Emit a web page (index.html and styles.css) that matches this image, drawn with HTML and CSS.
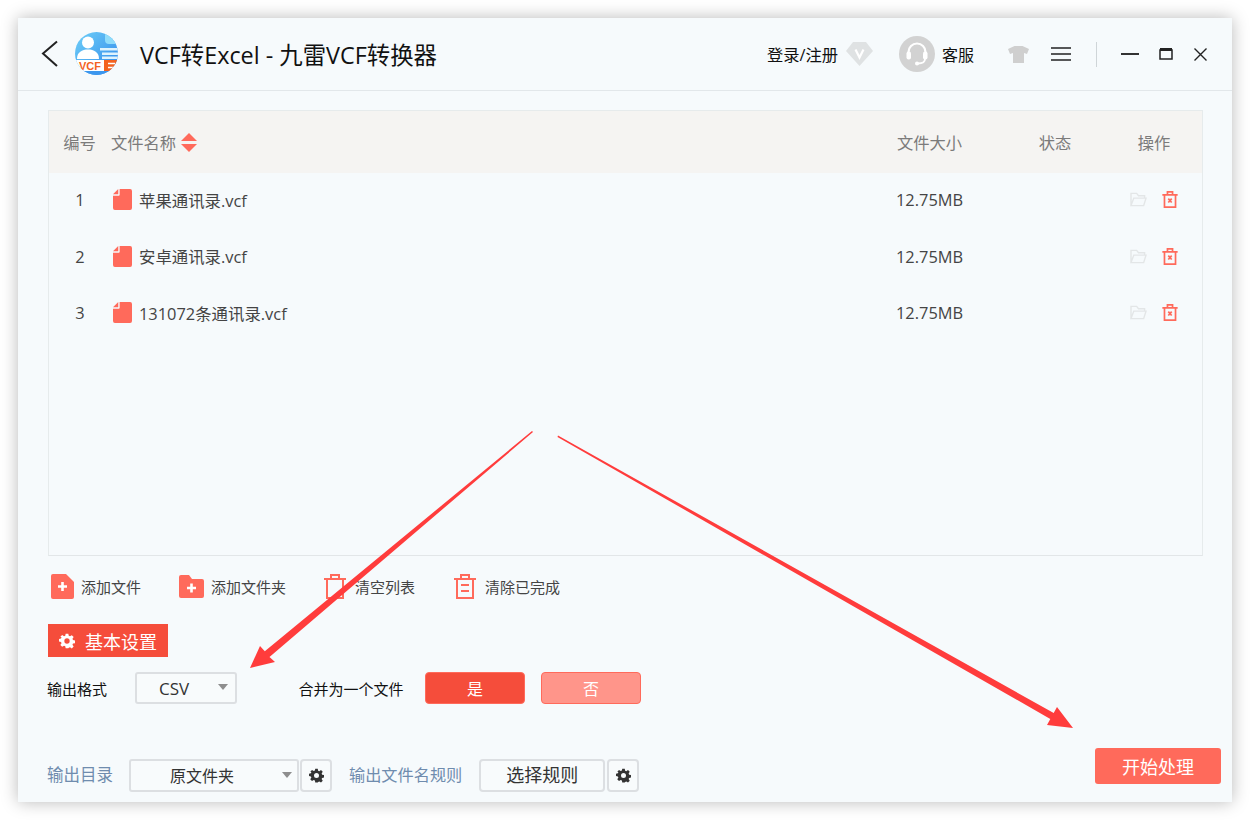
FILE: index.html
```html
<!DOCTYPE html>
<html lang="zh-CN">
<head>
<meta charset="utf-8">
<title>VCF转Excel - 九雷VCF转换器</title>
<link rel="stylesheet" href="styles.css">
</head>
<body>
<svg width="0" height="0" class="defs">
  <defs>
    <symbol id="gear" viewBox="0 0 24 24"><path fill-rule="evenodd" d="M10 1h4l.6 3.2 1.9.8 2.7-1.8 2.8 2.8-1.8 2.7.8 1.9 3 .6v4l-3 .6-.8 1.9 1.8 2.7-2.8 2.8-2.7-1.8-1.9.8L14 23h-4l-.6-3.2-1.9-.8-2.7 1.8L2 18l1.8-2.7-.8-1.9-3-.6V9l3-.6.8-1.9L2 5.800 4.800 3l2.700 1.800 1.900-.8zM12 8a4 4 0 1 0 0 8 4 4 0 0 0 0-8z"/></symbol>
    <symbol id="doc" viewBox="0 0 20 22"><path d="M7 0h11a2 2 0 0 1 2 2v18a2 2 0 0 1-2 2H2a2 2 0 0 1-2-2V7h6a1 1 0 0 0 1-1z"/><path d="M5.500 0v5.500H0z"/></symbol>
    <symbol id="folder" viewBox="0 0 18 16"><path fill="none" stroke="currentColor" stroke-width="1.500" d="M1 14.500V1.500h6l2 2.500h6.500v2.500M1 14.500h13.500l2.500-8H4z"/></symbol>
    <symbol id="bin" viewBox="0 0 18 20"><path fill="none" stroke="currentColor" stroke-width="2" d="M0 4.500h18M2.500 4.500V19h13V4.500M6 4.500V1h6v3.500"/><path fill="none" stroke="currentColor" stroke-width="2" d="M7 9l4 4.500M11 9l-4 4.500"/></symbol>
  </defs>
</svg>
<main class="window">
  <header class="titlebar">
    <svg class="back" width="18" height="28" viewBox="0 0 18 28"><path d="M16 1.500 2 13.500l14 12.500" fill="none" stroke="#222" stroke-width="2"/></svg>
    <svg class="logo" width="43" height="43" viewBox="0 0 43 43">
      <defs><linearGradient id="lg" x1="0" y1="0" x2="1" y2="1"><stop offset="0" stop-color="#6fd0f8"/><stop offset="1" stop-color="#2f86ea"/></linearGradient>
      <clipPath id="lc"><circle cx="21.500" cy="21.500" r="21.500"/></clipPath></defs>
      <circle cx="21.500" cy="21.500" r="21.500" fill="url(#lg)"/>
      <g clip-path="url(#lc)">
        <path d="M30 0h13v12H34a4 4 0 0 1-4-4z" fill="#8fdcfa"/>
        <circle cx="13" cy="10.500" r="6" fill="#fff"/>
        <path d="M2 27c0-7 5-9.500 11-9.500S24 20 24 27z" fill="#fff"/>
        <path d="M25 16h18v2.500H25zM27 20.500h16V23H27zM27 24.500h16V27H27z" fill="#dff3fd"/>
        <path d="M0 28h30v11H0z" fill="#fff"/>
        <path d="M29 28h14v11H29z" fill="#f4621f"/>
        <path d="M33 31.500h7M33 35.500h7" stroke="#fff" stroke-width="1.500"/>
        <text x="4" y="37.500" class="logo-text">VCF</text>
        <path d="M0 39h43v4H0z" fill="#3c97ee"/>
      </g>
    </svg>
    <h1 class="title">VCF转Excel - 九雷VCF转换器</h1>
    <div class="account">
      <span class="login">登录/注册</span>
      <svg width="27" height="24" viewBox="0 0 27 24"><path d="M7 0h13l7 9-13.500 15L0 9z" fill="#dfe2e3"/><path d="M9.500 7.500l4 8 4-8" fill="none" stroke="#fff" stroke-width="2.200"/></svg>
    </div>
    <div class="service">
      <svg width="36" height="36" viewBox="0 0 36 36"><circle cx="18" cy="18" r="18" fill="#d2d2d2"/><path d="M9.500 18v-2a8.500 8.500 0 0 1 17 0v2" fill="none" stroke="#fff" stroke-width="2.200"/><rect x="7.500" y="15.500" width="4.500" height="8" rx="2" fill="#fff"/><rect x="24" y="15.500" width="4.500" height="8" rx="2" fill="#fff"/><path d="M26 23c0 3-3 4.500-7 4.500" fill="none" stroke="#fff" stroke-width="1.800"/><circle cx="18" cy="27.500" r="2" fill="#fff"/></svg>
      <span>客服</span>
    </div>
    <svg class="shirt" width="21" height="17" viewBox="0 0 21 17"><path d="M6.500 0h8L21 3l-2 5-3-1v10H5V7L2 8 0 3z" fill="#cfcfcf"/></svg>
    <svg class="menu" width="20" height="14" viewBox="0 0 20 14"><path d="M0 1h20M0 7h20M0 13h20" stroke="#222" stroke-width="1.600"/></svg>
    <span class="divider"></span>
    <svg class="min" width="18" height="2" viewBox="0 0 18 2"><path d="M0 1h18" stroke="#333" stroke-width="2"/></svg>
    <svg class="max" width="14" height="12" viewBox="0 0 14 12"><path d="M1 2h12v9H1z" fill="none" stroke="#222" stroke-width="1.500"/><path d="M1 1.500h12" stroke="#222" stroke-width="3"/></svg>
    <svg class="close" width="13" height="13" viewBox="0 0 13 13"><path d="M.5.500l12 12M12.500.500l-12 12" stroke="#222" stroke-width="1.400"/></svg>
  </header>

  <div class="content">
    <section class="table">
      <div class="row head">
        <span class="c-center head-num">编号</span>
        <span class="name-head">文件名称
          <svg width="16" height="19" viewBox="0 0 16 19"><path d="M8 0l8 8H0zM0 11h16l-8 8z" fill="#ff6a5b"/></svg>
        </span>
        <span class="head-size">文件大小</span>
        <span class="c-center">状态</span>
        <span class="c-center head-ops">操作</span>
      </div>
      <div class="row item">
        <span class="c-center">1</span>
        <span class="file"><svg class="ico-doc" width="19" height="21"><use href="#doc"/></svg>苹果通讯录.vcf</span>
        <span>12.75MB</span><span></span>
        <span class="ops"><svg class="op-folder" width="17" height="15"><use href="#folder"/></svg><svg class="op-bin" width="16" height="17"><use href="#bin"/></svg></span>
      </div>
      <div class="row item">
        <span class="c-center">2</span>
        <span class="file"><svg class="ico-doc" width="19" height="21"><use href="#doc"/></svg>安卓通讯录.vcf</span>
        <span>12.75MB</span><span></span>
        <span class="ops"><svg class="op-folder" width="17" height="15"><use href="#folder"/></svg><svg class="op-bin" width="16" height="17"><use href="#bin"/></svg></span>
      </div>
      <div class="row item">
        <span class="c-center">3</span>
        <span class="file"><svg class="ico-doc" width="19" height="21"><use href="#doc"/></svg>131072条通讯录.vcf</span>
        <span>12.75MB</span><span></span>
        <span class="ops"><svg class="op-folder" width="17" height="15"><use href="#folder"/></svg><svg class="op-bin" width="16" height="17"><use href="#bin"/></svg></span>
      </div>
    </section>

    <div class="toolbar">
      <span class="tool">
        <svg class="t-icon" width="23" height="25" viewBox="0 0 23 25"><path d="M2 0h13l8 8v15a2 2 0 0 1-2 2H2a2 2 0 0 1-2-2V2a2 2 0 0 1 2-2z" fill="#ff6a5b"/><path d="M11.500 8v9M7 12.500h9" stroke="#fff" stroke-width="2.600"/></svg>
        添加文件
      </span>
      <span class="tool">
        <svg class="t-icon" width="25" height="23" viewBox="0 0 25 23"><path d="M2 0h8l3 4h10a2 2 0 0 1 2 2v15a2 2 0 0 1-2 2H2a2 2 0 0 1-2-2V2a2 2 0 0 1 2-2z" fill="#ff6a5b"/><path d="M12.500 8.500v9M8 13h9" stroke="#fff" stroke-width="2.600"/></svg>
        添加文件夹
      </span>
      <span class="tool tool-bin">
        <svg class="t-icon" width="22" height="25" viewBox="0 0 22 25"><path d="M0 5h22M3 5v19h16V5M7 5V1h8v4" fill="none" stroke="#ff6a5b" stroke-width="2"/></svg>
        清空列表
      </span>
      <span class="tool tool-bin">
        <svg class="t-icon" width="22" height="25" viewBox="0 0 22 25"><path d="M0 5h22M3 5v19h16V5M7 5V1h8v4M7 11h8M7 17h8" fill="none" stroke="#ff6a5b" stroke-width="2"/></svg>
        清除已完成
      </span>
    </div>

    <div class="tag"><svg class="tag-gear" width="16" height="16"><use href="#gear"/></svg>基本设置</div>

    <div class="format-row">
      <span class="label">输出格式</span>
      <div class="select select-csv">CSV<i class="caret"></i></div>
      <span class="label merge">合并为一个文件</span>
      <span class="btn btn-yes">是</span>
      <span class="btn btn-no">否</span>
    </div>

    <div class="output-row">
      <span class="link link-dir">输出目录</span>
      <div class="select select-dir">原文件夹<i class="caret caret-dir"></i></div>
      <span class="gear-box"><svg width="15" height="15"><use href="#gear"/></svg></span>
      <span class="link link-rule">输出文件名规则</span>
      <span class="rule-btn">选择规则</span>
      <span class="gear-box gear-rule"><svg width="15" height="15"><use href="#gear"/></svg></span>
      <span class="start">开始处理</span>
    </div>
  </div>
</main>
<svg class="arrows" width="1250" height="820" viewBox="0 0 1250 820">
  <path d="M533 432 L532 431 L264.800 651.300 L260 646 L250 668 L275 662 L269.500 657z" fill="#ff3c3c"/>
  <path d="M558 435.500 L557.500 437 L1050.300 719 L1047 725 L1073 728 L1057 707 L1053.700 713z" fill="#ff3c3c"/>
</svg>
</body>
</html>
```
FILE: styles.css
```css
* { box-sizing: border-box; }
html, body { margin: 0; height: 100%; }
body {
  width: 1250px;
  height: 820px;
  padding: 18px;
  background: #fff;
  overflow: hidden;
  font-family: "Open Sans", "Noto Sans CJK SC", sans-serif;
  color: #333;
}
.defs { position: absolute; }
.window {
  width: 1214px;
  height: 784px;
  background: #f6fafc;
  box-shadow: 0 0 16px rgba(0, 0, 0, .28);
  display: flex;
  flex-direction: column;
}
.titlebar {
  flex: none;
  height: 73px;
  border-bottom: 1px solid #e2e7ea;
  display: flex;
  align-items: center;
  padding-left: 23px;
}
.back { margin-right: 16px; margin-top: -1px; }
.logo { margin-right: 22px; margin-top: -1px; }
.logo-text { font: 700 11px "Liberation Sans", sans-serif; fill: #f4621f; }
.title {
  margin: 0;
  font-size: 23.400px;
  font-weight: 400;
  color: #111;
  white-space: nowrap;
  flex: 1;
}
.account { display: flex; align-items: center; gap: 8px; margin-right: 26px; font-size: 16.300px; color: #111; }
.service { display: flex; align-items: center; gap: 7px; margin-right: 34px; font-size: 16px; color: #111; }
.shirt { margin-right: 22px; }
.menu { margin-right: 25px; }
.divider { width: 1px; height: 25px; background: #cfd5d8; margin-right: 24px; }
.min { margin-right: 20px; }
.max { margin-right: 21px; }
.close { margin-right: 25px; }

.content {
  flex: 1;
  padding: 19px 29px 0 30px;
  display: flex;
  flex-direction: column;
}
.table {
  flex: none;
  height: 446px;
  border: 1px solid #e6ebec;
  border-bottom-color: #e2e6e8;
}
.row {
  display: grid;
  grid-template-columns: 62px 785px 110px 98px 99px;
  align-items: center;
}
.head {
  height: 62px;
  margin-bottom: -1.500px;
  background: #f5f4f2;
  color: #7b7b7b;
  font-size: 16.300px;
}
.head-num { margin-left: -1px; }
.head-size { margin-left: 1px; }
.head-ops { margin-left: 1px; }
.item { height: 56.500px; font-size: 16.400px; color: #444; }
.c-center { text-align: center; }
.name-head { display: flex; align-items: center; gap: 5px; }
.file { display: flex; align-items: center; gap: 7px; margin-left: 2px; }
.ico-doc { fill: #ff6a5b; flex: none; }
.ops { display: flex; justify-content: center; align-items: center; gap: 15px; }
.op-folder { color: #e3e6e7; }
.op-bin { color: #ff6a5b; }

.toolbar {
  display: flex;
  margin-top: 18px;
  height: 24px;
  align-items: center;
  padding-left: 3px;
  font-size: 15px;
  color: #444;
}
.tool { display: flex; align-items: center; gap: 7px; margin-right: 38px; white-space: nowrap; }
.tool-bin { gap: 9px; margin-right: 39px; }

.tag {
  margin-top: 26px;
  width: 120px;
  height: 33px;
  background: #f54d3b;
  color: #fff;
  font-size: 18px;
  display: flex;
  align-items: center;
  padding-left: 11px;
  gap: 10px;
}
.tag-gear { fill: #fff; }

.format-row {
  margin-top: 15px;
  height: 32px;
  display: flex;
  align-items: center;
  margin-left: -1px;
  font-size: 15px;
}
.label { color: #111; white-space: nowrap; }
.select {
  position: relative;
  height: 32px;
  background: #f8fbfc;
  border: 2px solid #dcdfe2;
  border-radius: 3px;
  font-size: 16px;
  color: #333;
  display: flex;
  align-items: center;
}
.select-csv { width: 102px; margin-left: 28px; padding-left: 22px; font-size: 17px; }
.caret {
  position: absolute;
  right: 7px;
  top: 10px;
  border: 5px solid transparent;
  border-top: 6px solid #8e8e8e;
  border-bottom: 0;
}
.caret-dir { right: 5px; top: 11px; }
.merge { margin-left: 61.500px; margin-right: 21.500px; }
.btn {
  width: 100px;
  height: 32px;
  border-radius: 4px;
  color: #fff;
  font-size: 16px;
  display: flex;
  align-items: center;
  justify-content: center;
}
.btn-yes { background: #f54d3b; border: 1px solid #ff6a5b; }
.btn-no { background: #ff958a; border: 1px solid #ff6a5b; margin-left: 16px; }

.output-row {
  margin-top: 55px;
  display: flex;
  align-items: center;
  height: 33px;
  margin-left: -1px;
  position: relative;
}
.link { color: #6f8cae; font-size: 16.200px; white-space: nowrap; margin-bottom: 4px; }
.link-dir { font-size: 16.500px; }
.select-dir { width: 170px; height: 33px; margin-left: 16px; padding-left: 39px; padding-bottom: 2px; }
.gear-box, .rule-btn {
  height: 33px;
  background: #f8fbfc;
  border: 2px solid #dcdfe2;
  border-radius: 4px;
  display: flex;
  align-items: center;
  justify-content: center;
}
.gear-box { width: 32px; margin-left: 1px; fill: #333; }
.gear-rule { margin-left: 2px; }
.link-rule { margin-left: 17px; margin-right: 17px; }
.rule-btn { width: 126px; font-size: 18px; color: #333; padding-bottom: 3px; }
.start {
  position: absolute;
  right: -18px;
  top: -11px;
  width: 126px;
  height: 36px;
  border-radius: 3px;
  background: #ff6a5b;
  color: #fff;
  font-size: 18px;
  display: flex;
  align-items: center;
  justify-content: center;
}
.arrows { position: absolute; left: 0; top: 0; pointer-events: none; }
```
